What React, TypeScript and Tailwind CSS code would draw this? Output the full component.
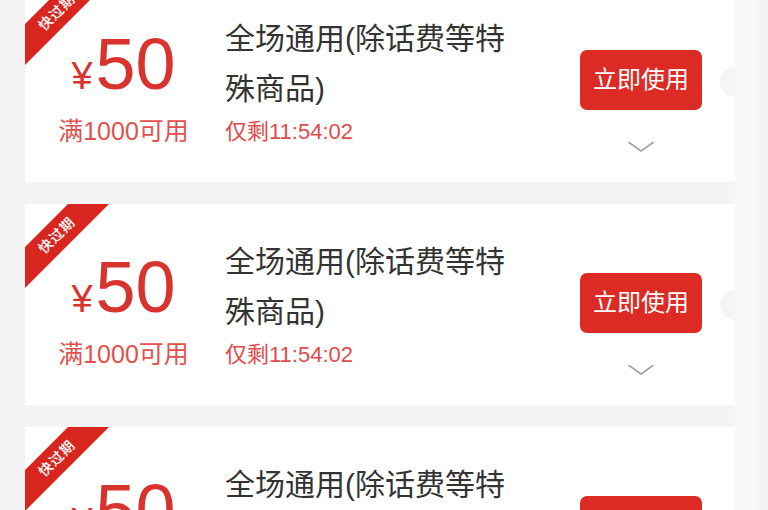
import { Fragment } from 'react';

const font = { fontFamily: '"Liberation Sans", "Noto Sans CJK SC", sans-serif' };

function Chevron() {
  return (
    <svg width="26" height="12" viewBox="0 0 26 12" fill="none">
      <path d="M1 1.5 L13 10 L25 1.5" stroke="#a3a3a3" strokeWidth="1.6" strokeLinecap="round" strokeLinejoin="round" />
    </svg>
  );
}

function CouponCard() {
  return (
    <div className="relative flex h-[201px] w-[710px] shrink-0 bg-white">
      {/* corner ribbon and the notch on the right edge, both clipped by the card */}
      <div className="absolute inset-0 overflow-hidden">
        <div className="absolute left-[-34px] top-[17px] flex h-[29px] w-[132px] -rotate-45 items-center justify-center bg-[#d8261f] text-[14px] font-medium tracking-[1px] text-white">
          快过期
        </div>
        <div className="absolute right-[-15px] top-[86px] h-[30px] w-[30px] rounded-full bg-[#f5f5f5]" />
      </div>

      <div className="flex w-[197px] flex-col items-center pt-[47px]">
        <div className="flex items-baseline text-[#d9332e]">
          <span className="mr-[3px] text-[38px] leading-[72px]">¥</span>
          <span className="text-[72px] leading-[72px]">50</span>
        </div>
        <div className="mt-[7px] text-[25px] leading-[25px] text-[#e2514d]">满1000可用</div>
      </div>

      <div className="flex w-[300px] flex-col pl-[3px] pt-[33px]">
        <div className="w-[296px] text-[30px] leading-[50px] text-[#333333]">全场通用(除话费等特殊商品)</div>
        <div className="mt-[7px] text-[22px] leading-[22px] text-[#e24b4b]">仅剩11:54:02</div>
      </div>

      <div className="flex flex-1 flex-col items-center pl-[25px] pt-[69px]">
        <button className="flex h-[60px] w-[122px] items-center justify-center rounded-[7px] bg-[#dc2a25] text-[24px] text-white">
          立即使用
        </button>
        <div className="mt-[31px]">
          <Chevron />
        </div>
      </div>
    </div>
  );
}

export default function App() {
  const cards = [1, 2, 3];
  return (
    <div className="flex h-[510px] w-[768px] overflow-hidden bg-[#f4f4f4]" style={font}>
      <div className="mt-[-19px] flex w-[735px] shrink-0 flex-col gap-[22px] pl-[25px]">
        {cards.map((c) => (
          <Fragment key={c}>
            <CouponCard />
          </Fragment>
        ))}
      </div>
      <div className="h-full w-[23px] shrink-0 bg-[#f9f9f9]" />
    </div>
  );
}
